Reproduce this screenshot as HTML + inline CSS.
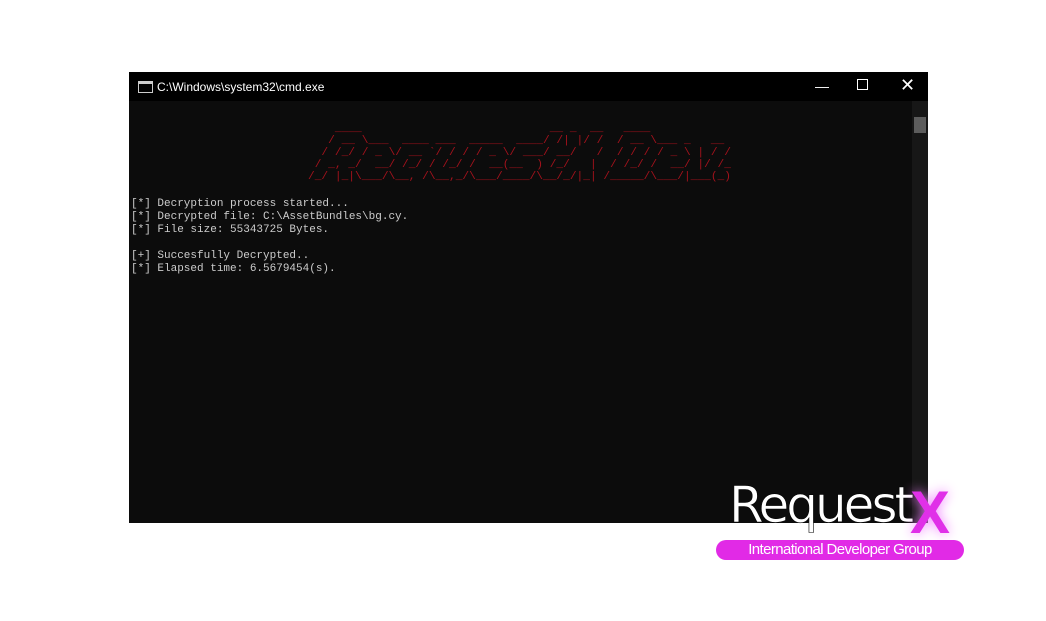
<!DOCTYPE html>
<html><head><style>
html,body{margin:0;padding:0;background:#fff;width:1046px;height:621px;overflow:hidden;position:relative;font-family:"Liberation Sans",sans-serif}
.win{position:absolute;left:129px;top:72px;width:799px;height:451px;background:#0c0c0c}
.title{position:absolute;left:0;top:0;width:799px;height:29px;background:#000;color:#fff;font-size:12px}
.title .t{position:absolute;left:28px;top:8px}
.ico{position:absolute;left:9px;top:9px;width:13px;height:10px;border:1px solid #ccc;background:#000}
.ico:before{content:"";position:absolute;left:0;top:0;right:0;height:2px;background:#ccc}
.ctl{position:absolute;top:6px;color:#fff;font-size:14px}
.sb{position:absolute;left:783px;top:29px;width:16px;height:422px;background:#171717}
.thumb{position:absolute;left:2px;top:16px;width:12px;height:16px;background:#5d5d5d}
pre{margin:0;font-family:"Liberation Mono",monospace;font-size:11px;line-height:13px;position:absolute}
.out{left:2px;top:126px;color:#cccccc}
.art{left:179px;top:51px;color:#a5121c;font-size:11.2px;line-height:12px}
.logo{position:absolute;left:729px;top:476px;font-size:50px;color:#fff;font-family:"DejaVu Sans",sans-serif;font-weight:normal;letter-spacing:-3px;-webkit-text-stroke:0.6px #000}
.x{position:absolute;left:910px;top:478px;font-size:60px;color:#e030e8;font-weight:bold;text-shadow:0 0 12px #f080ff}
.pill{position:absolute;left:716px;top:540px;width:248px;height:20px;border-radius:10px;background:#e12ae6;color:#fff;font-size:15px;line-height:20px;text-align:center;letter-spacing:-0.6px}
</style></head><body>
<div class="win">
<div class="title"><div class="ico"></div><span class="t">C:\Windows\system32\cmd.exe</span>
<span class="ctl" style="left:686px">&#8212;</span>
<span class="ctl" style="left:728px;top:7px;width:9px;height:9px;border:1px solid #fff"></span>
<span class="ctl" style="left:771px;top:3px;font-size:18px">&#x2715;</span></div>
<div class="sb"><div class="thumb"></div></div>
<pre class="art">    ____                            __ _  __   ____
   / __ \___  ____ ___  _____  ____/ /| |/ /  / __ \___ _   __
  / /_/ / _ \/ __ `/ / / / _ \/ ___/ __/   /  / / / / _ \ | / /
 / _, _/  __/ /_/ / /_/ /  __(__  ) /_/   |  / /_/ /  __/ |/ /_
/_/ |_|\___/\__, /\__,_/\___/____/\__/_/|_| /_____/\___/|___(_)</pre>
<pre class="out">[*] Decryption process started...
[*] Decrypted file: C:\AssetBundles\bg.cy.
[*] File size: 55343725 Bytes.

[+] Succesfully Decrypted..
[*] Elapsed time: 6.5679454(s).</pre>
</div>
<div class="logo">Request</div>
<div class="x">X</div>
<div class="pill">International Developer Group</div>
</body></html>
